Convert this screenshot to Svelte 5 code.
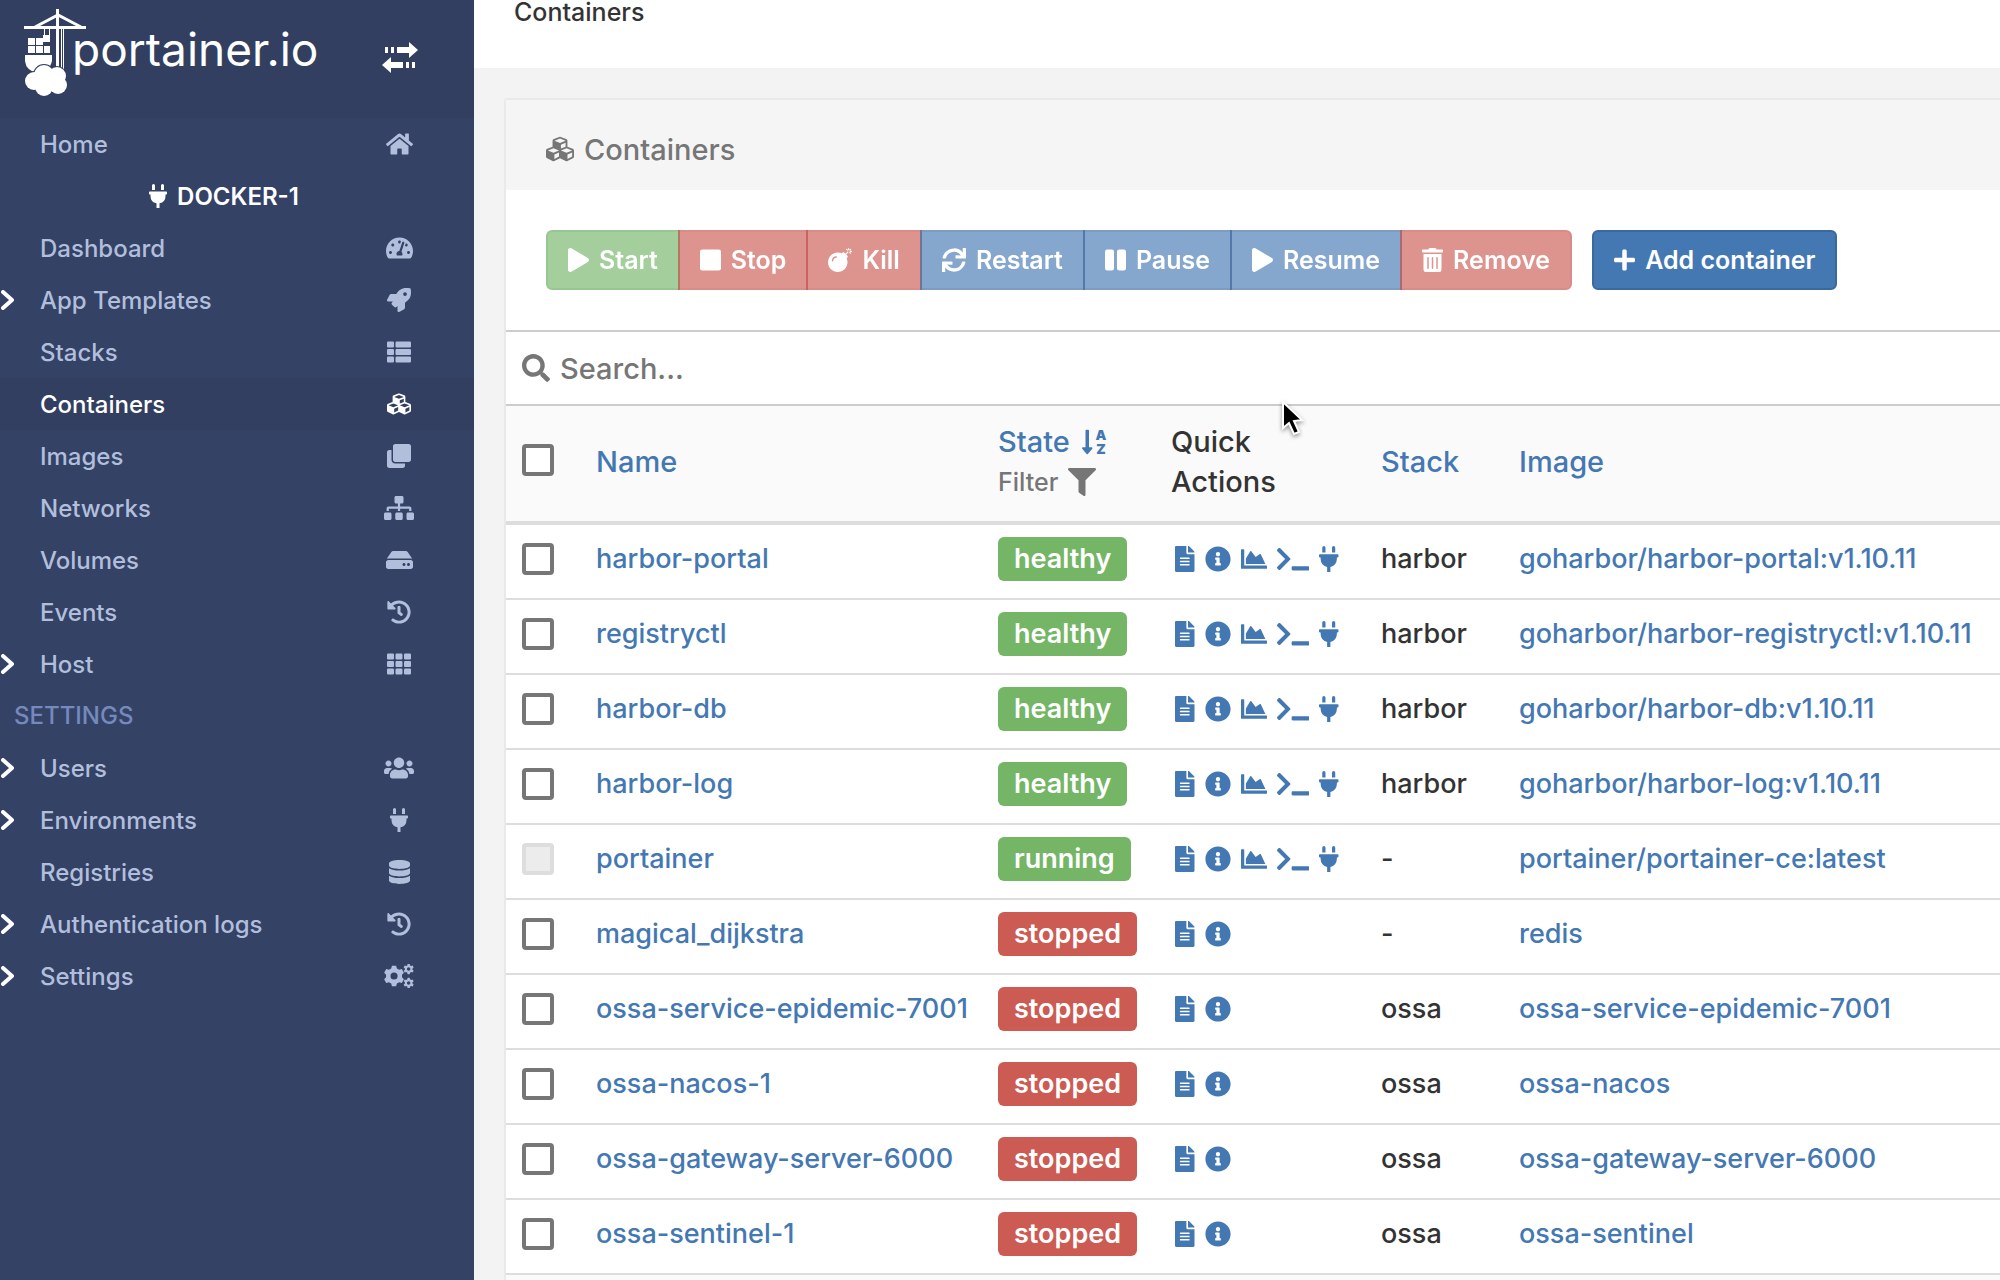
<script lang="ts">
	type Container = {
		name: string;
		state: 'healthy' | 'running' | 'stopped';
		stack: string;
		image: string;
		locked?: boolean;
	};

	const cell = (x: number, y: number, w: number, h: number, r = 24) =>
		`M${x + r} ${y}h${w - 2 * r}a${r} ${r} 0 0 1 ${r} ${r}v${h - 2 * r}a${r} ${r} 0 0 1-${r} ${r}h-${w - 2 * r}a${r} ${r} 0 0 1-${r}-${r}v-${h - 2 * r}a${r} ${r} 0 0 1 ${r}-${r}z`;

	const gear = (cx: number, cy: number, outer: number, inner: number, hole: number) => {
		const teeth = 6;
		const points: string[] = [];
		for (let i = 0; i < teeth; i++) {
			const mid = (i / teeth) * Math.PI * 2 - Math.PI / 2;
			const corners = [
				[inner, -0.36],
				[outer, -0.2],
				[outer, 0.2],
				[inner, 0.36]
			];
			for (const [r, a] of corners) {
				points.push(`${cx + r * Math.cos(mid + a)} ${cy + r * Math.sin(mid + a)}`);
			}
		}
		return `M${points.join('L')}zM${cx - hole} ${cy}a${hole} ${hole} 0 1 0 ${hole * 2} 0a${hole} ${hole} 0 1 0-${hole * 2} 0z`;
	};

	const rows = [32, 192, 352];

	const icons: Record<string, { w: number; d: string }> = {
		home: {
			w: 576,
			d: 'M280.37 148.26L96 300.11V464a16 16 0 0 0 16 16l112.06-.29a16 16 0 0 0 15.92-16V368a16 16 0 0 1 16-16h64a16 16 0 0 1 16 16v95.64a16 16 0 0 0 16 16.05L464 480a16 16 0 0 0 16-16V300L295.67 148.26a12.19 12.19 0 0 0-15.3 0zM571.6 251.47L488 182.56V44.05a12 12 0 0 0-12-12h-56a12 12 0 0 0-12 12v72.61L318.47 43a48 48 0 0 0-61 0L4.34 251.47a12 12 0 0 0-1.6 16.9l25.5 31A12 12 0 0 0 45.15 301l235.22-193.74a12.19 12.19 0 0 1 15.3 0L530.9 301a12 12 0 0 0 16.9-1.6l25.5-31a12 12 0 0 0-1.7-16.93z'
		},
		tachometer: {
			w: 576,
			d: 'M288 32C128.94 32 0 160.94 0 320c0 52.8 14.25 102.26 39.06 144.8 5.61 9.62 16.3 15.2 27.44 15.2h443c11.14 0 21.83-5.58 27.44-15.2C561.75 422.26 576 372.8 576 320c0-159.06-128.94-288-288-288zm0 64c14.71 0 26.58 10.13 30.32 23.65-1.11 2.26-2.64 4.23-3.45 6.67l-9.22 27.67c-5.13 3.49-10.97 6.01-17.64 6.01-17.67 0-32-14.33-32-32S270.33 96 288 96zM96 384c-17.67 0-32-14.33-32-32s14.33-32 32-32 32 14.33 32 32-14.33 32-32 32zm48-160c-17.67 0-32-14.33-32-32s14.33-32 32-32 32 14.33 32 32-14.33 32-32 32zm246.77-72.41l-61.33 184C343.13 347.33 352 364.54 352 384c0 11.72-3.38 22.55-8.88 32H232.88c-5.5-9.45-8.88-20.28-8.88-32 0-33.94 26.5-61.43 59.9-63.59l61.34-184.01c4.17-12.56 17.73-19.45 30.36-15.17 12.57 4.19 19.35 17.79 15.17 30.36zm14.66 57.2l15.52-46.55c3.47-1.29 7.13-2.23 11.05-2.23 17.67 0 32 14.33 32 32s-14.33 32-32 32c-11.38-.01-20.89-6.28-26.57-15.22zM480 384c-17.67 0-32-14.33-32-32s14.33-32 32-32 32 14.33 32 32-14.33 32-32 32z'
		},
		rocket: {
			w: 512,
			d: 'M505.12 19.094c-1.19-5.532-6.658-11-12.207-12.188C460.716 0 435.507 0 410.407 0 307.175 0 245.27 55.203 199.052 128H94.838c-16.348.016-35.557 11.875-42.887 26.484L2.516 253.297A28.4 28.4 0 0 0 0 264a24.009 24.009 0 0 0 24.006 24h103.81l-22.474 22.469c-11.366 11.36-12.996 32.258 0 45.25l50.904 50.906c11.156 11.188 32.156 13.156 45.277 0l22.475-22.469V488a24.009 24.009 0 0 0 24.005 24 28.56 28.56 0 0 0 10.707-2.516l98.729-49.39c14.629-7.297 26.508-26.5 26.508-42.86V312.797c72.597-46.313 128.035-108.406 128.035-211.094.093-25.203.093-50.406-6.862-82.61zM384.04 168A40 40 0 1 1 424.05 128a40.023 40.023 0 0 1-40.01 40z'
		},
		list: {
			w: 512,
			d: rows.map((y) => cell(0, y, 149, 128) + cell(181, y, 331, 128)).join('')
		},
		grid: {
			w: 512,
			d: rows.map((y) => cell(0, y, 149, 128) + cell(181, y, 149, 128) + cell(363, y, 149, 128)).join('')
		},
		cubes: {
			w: 512,
			d: 'M488.6 250.2L392 214V105.5c0-15-9.3-28.4-23.4-33.7l-100-37.5c-8.1-3.1-17.1-3.1-25.3 0l-100 37.5c-14.1 5.3-23.4 18.7-23.4 33.7V214l-96.6 36.2C9.3 255.5 0 268.9 0 283.9V394c0 13.6 7.7 26.1 19.9 32.2l100 50c10.1 5.1 22.1 5.1 32.2 0l103.9-52 103.9 52c10.1 5.1 22.1 5.1 32.2 0l100-50c12.2-6.1 19.9-18.6 19.9-32.2V283.9c0-15-9.3-28.4-23.4-33.7zM358 214.8l-85 31.9v-68.2l85-37v73.3zM154 104.1l102-38.2 102 38.2v.6l-102 41.4-102-41.4v-.6zm84 291.1l-85 42.5v-79.1l85-38.8v75.4zm0-112l-102 41.4-102-41.4v-.6l102-38.2 102 38.2v.6zm240 112l-85 42.5v-79.1l85-38.8v75.4zm0-112l-102 41.4-102-41.4v-.6l102-38.2 102 38.2v.6z'
		},
		clone: {
			w: 512,
			d: 'M464 0c26.51 0 48 21.49 48 48v288c0 26.51-21.49 48-48 48H176c-26.51 0-48-21.49-48-48V48c0-26.51 21.49-48 48-48h288M176 416c-44.112 0-80-35.888-80-80V128H48c-26.51 0-48 21.49-48 48v288c0 26.51 21.49 48 48 48h288c26.51 0 48-21.49 48-48v-48H176z'
		},
		sitemap: {
			w: 640,
			d: 'M128 352H32c-17.67 0-32 14.33-32 32v96c0 17.67 14.33 32 32 32h96c17.67 0 32-14.33 32-32v-96c0-17.67-14.33-32-32-32zm-24-80h192v48h48v-48h192v48h48v-57.59c0-21.17-17.23-38.41-38.41-38.41H344v-64h40c17.67 0 32-14.33 32-32V32c0-17.67-14.33-32-32-32H256c-17.67 0-32 14.33-32 32v96c0 17.67 14.33 32 32 32h40v64H94.41C73.23 224 56 241.23 56 262.41V320h48v-48zm264 80h-96c-17.67 0-32 14.33-32 32v96c0 17.67 14.33 32 32 32h96c17.67 0 32-14.33 32-32v-96c0-17.67-14.33-32-32-32zm240 0h-96c-17.67 0-32 14.33-32 32v96c0 17.67 14.33 32 32 32h96c17.67 0 32-14.33 32-32v-96c0-17.67-14.33-32-32-32z'
		},
		hdd: {
			w: 576,
			d: 'M576 304v96c0 26.51-21.49 48-48 48H48c-26.51 0-48-21.49-48-48v-96c0-26.51 21.49-48 48-48h480c26.51 0 48 21.49 48 48zm-48-80a79.557 79.557 0 0 1 30.777 6.165L462.25 85.374A48.003 48.003 0 0 0 422.311 64H153.689a48 48 0 0 0-39.938 21.374L17.223 230.165A79.557 79.557 0 0 1 48 224h480zm-48 96c-17.673 0-32 14.327-32 32s14.327 32 32 32 32-14.327 32-32-14.327-32-32-32zm-96 0c-17.673 0-32 14.327-32 32s14.327 32 32 32 32-14.327 32-32-14.327-32-32-32z'
		},
		history: {
			w: 512,
			d: 'M504 255.531c.253 136.64-111.18 248.372-247.82 248.468-59.015.042-113.223-20.53-155.822-54.911-11.077-8.94-11.905-25.541-1.839-35.607l11.267-11.267c8.609-8.609 22.353-9.551 31.891-1.984C173.062 425.135 212.781 440 256 440c101.705 0 184-82.311 184-184 0-101.705-82.311-184-184-184-48.814 0-93.149 18.969-126.068 49.932l50.754 50.754c10.08 10.08 2.941 27.314-11.313 27.314H24c-8.837 0-16-7.163-16-16V38.627c0-14.254 17.234-21.393 27.314-11.314l49.372 49.372C129.209 34.136 189.552 8 256 8c136.81 0 247.747 110.78 248 247.531zm-180.912 78.784l9.823-12.63c8.138-10.463 6.253-25.542-4.21-33.679L288 256.349V152c0-13.255-10.745-24-24-24h-16c-13.255 0-24 10.745-24 24v135.651l65.409 50.874c10.463 8.137 25.541 6.253 33.679-4.21z'
		},
		users: {
			w: 640,
			d: 'M96 224c35.3 0 64-28.7 64-64s-28.7-64-64-64-64 28.7-64 64 28.7 64 64 64zm448 0c35.3 0 64-28.7 64-64s-28.7-64-64-64-64 28.7-64 64 28.7 64 64 64zm32 32h-64c-17.6 0-33.5 7.1-45.1 18.6 40.3 22.1 68.9 62 75.1 109.4h66c17.7 0 32-14.3 32-32v-32c0-35.3-28.7-64-64-64zm-256 0c61.9 0 112-50.1 112-112S381.9 32 320 32 208 82.1 208 144s50.1 112 112 112zm76.8 32h-8.3c-20.8 10-43.9 16-68.5 16s-47.6-6-68.5-16h-8.3C179.6 288 128 339.6 128 403.2V432c0 26.5 21.5 48 48 48h288c26.5 0 48-21.5 48-48v-28.8c0-63.6-51.6-115.2-115.2-115.2zm-223.7-13.4C161.5 263.1 145.6 256 128 256H64c-35.3 0-64 28.7-64 64v32c0 17.7 14.3 32 32 32h65.9c6.3-47.4 34.9-87.3 75.2-109.4z'
		},
		plug: {
			w: 384,
			d: 'M320 32a32 32 0 0 0-64 0v96h64zm48 128H16A16 16 0 0 0 0 176v32a16 16 0 0 0 16 16h16v32a160.07 160.07 0 0 0 128 156.8V512h64v-99.2A160.07 160.07 0 0 0 352 256v-32h16a16 16 0 0 0 16-16v-32a16 16 0 0 0-16-16zM128 32a32 32 0 0 0-64 0v96h64z'
		},
		database: {
			w: 448,
			d: 'M448 73.143v45.714C448 159.143 347.667 192 224 192S0 159.143 0 118.857V73.143C0 32.857 100.333 0 224 0s224 32.857 224 73.143zM448 176v102.857C448 319.143 347.667 352 224 352S0 319.143 0 278.857V176c48.125 33.143 136.208 48.572 224 48.572S399.874 209.143 448 176zm0 160v102.857C448 479.143 347.667 512 224 512S0 479.143 0 438.857V336c48.125 33.143 136.208 48.572 224 48.572S399.874 369.143 448 336z'
		},
		cogs: {
			w: 640,
			d: gear(214, 256, 222, 172, 76) + gear(526, 108, 112, 82, 38) + gear(526, 404, 112, 82, 38)
		},
		play: {
			w: 448,
			d: 'M424.4 214.7L72.4 6.6C43.8-10.3 0 6.1 0 47.9V464c0 37.5 40.7 60.1 72.4 41.3l352-208c31.4-18.5 31.5-64.1 0-82.6z'
		},
		stop: { w: 448, d: cell(0, 32, 448, 448, 48) },
		bomb: {
			w: 512,
			d: 'M440.5 88.5l-52 52L415 167c9.4 9.4 9.4 24.6 0 33.9l-17.4 17.4c11.8 26.1 18.4 55.1 18.4 85.6 0 114.9-93.1 208-208 208S0 418.9 0 304 93.1 96 208 96c30.5 0 59.5 6.6 85.6 18.4L311 97c9.4-9.4 24.6-9.4 33.9 0l26.5 26.5 52-52 17.1 17zM500 60h-24c-6.6 0-12 5.4-12 12s5.4 12 12 12h24c6.6 0 12-5.4 12-12s-5.4-12-12-12zM440 0c-6.6 0-12 5.4-12 12v24c0 6.6 5.4 12 12 12s12-5.4 12-12V12c0-6.6-5.4-12-12-12zm33.9 55l17-17c4.7-4.7 4.7-12.3 0-17-4.7-4.7-12.3-4.7-17 0l-17 17c-4.7 4.7-4.7 12.3 0 17 4.8 4.7 12.4 4.7 17 0zm-67.8 0c4.7 4.7 12.3 4.7 17 0 4.7-4.7 4.7-12.3 0-17l-17-17c-4.7-4.7-12.3-4.7-17 0-4.7 4.7-4.7 12.3 0 17l17 17zm67.8 34c-4.7-4.7-12.3-4.7-17 0-4.7 4.7-4.7 12.3 0 17l17 17c4.7 4.7 12.3 4.7 17 0 4.7-4.7 4.7-12.3 0-17l-17-17zM112 272c0-35.3 28.7-64 64-64 8.8 0 16-7.2 16-16s-7.2-16-16-16c-52.9 0-96 43.1-96 96 0 8.8 7.2 16 16 16s16-7.2 16-16z'
		},
		sync: {
			w: 512,
			d: 'M440.65 12.57l4 82.77A247.16 247.16 0 0 0 255.83 8C134.73 8 33.91 94.92 12.29 209.82A12 12 0 0 0 24.09 224h49.05a12 12 0 0 0 11.67-9.26 175.91 175.91 0 0 1 317-56.94l-101.46-4.86a12 12 0 0 0-12.57 12v47.41a12 12 0 0 0 12 12H500a12 12 0 0 0 12-12V12a12 12 0 0 0-12-12h-47.37a12 12 0 0 0-11.98 12.57zM255.83 432a175.61 175.61 0 0 1-146-77.8l101.8 4.87a12 12 0 0 0 12.57-12v-47.4a12 12 0 0 0-12-12H12a12 12 0 0 0-12 12V500a12 12 0 0 0 12 12h47.35a12 12 0 0 0 12-12.6l-4.15-82.57A247.17 247.17 0 0 0 255.83 504c121.11 0 221.93-86.92 243.55-201.82a12 12 0 0 0-11.8-14.18h-49.05a12 12 0 0 0-11.67 9.26A175.86 175.86 0 0 1 255.83 432z'
		},
		pause: { w: 448, d: cell(0, 32, 192, 448, 48) + cell(256, 32, 192, 448, 48) },
		trash: {
			w: 448,
			d: 'M32 464a48 48 0 0 0 48 48h288a48 48 0 0 0 48-48V128H32zm272-256a16 16 0 0 1 32 0v224a16 16 0 0 1-32 0zm-96 0a16 16 0 0 1 32 0v224a16 16 0 0 1-32 0zm-96 0a16 16 0 0 1 32 0v224a16 16 0 0 1-32 0zM432 32H312l-9.4-18.7A24 24 0 0 0 281.1 0H166.8a23.72 23.72 0 0 0-21.4 13.3L136 32H16A16 16 0 0 0 0 48v32a16 16 0 0 0 16 16h416a16 16 0 0 0 16-16V48a16 16 0 0 0-16-16z'
		},
		plus: {
			w: 448,
			d: 'M416 208H272V64c0-17.67-14.33-32-32-32h-32c-17.67 0-32 14.33-32 32v144H32c-17.67 0-32 14.33-32 32v32c0 17.67 14.33 32 32 32h144v144c0 17.67 14.33 32 32 32h32c17.67 0 32-14.33 32-32V304h144c17.67 0 32-14.33 32-32v-32c0-17.67-14.33-32-32-32z'
		},
		search: {
			w: 512,
			d: 'M505 442.7L405.3 343c-4.5-4.5-10.6-7-17-7H372c27.6-35.3 44-79.7 44-128C416 93.1 322.9 0 208 0S0 93.1 0 208s93.1 208 208 208c48.3 0 92.7-16.4 128-44v16.3c0 6.4 2.5 12.5 7 17l99.7 99.7c9.4 9.4 24.6 9.4 33.9 0l28.3-28.3c9.4-9.4 9.4-24.6.1-34zM208 336c-70.7 0-128-57.2-128-128 0-70.7 57.2-128 128-128 70.7 0 128 57.2 128 128 0 70.7-57.2 128-128 128z'
		},
		filter: {
			w: 512,
			d: 'M487.976 0H24.028C2.71 0-8.047 25.866 7.058 40.971L192 225.941V432c0 7.831 3.821 15.17 10.237 19.662l80 55.98C298.02 518.69 320 507.493 320 487.98V225.941l184.947-184.97C520.021 25.896 509.338 0 487.976 0z'
		},
		file: {
			w: 384,
			d: 'M224 136V0H24C10.7 0 0 10.7 0 24v464c0 13.3 10.7 24 24 24h336c13.3 0 24-10.7 24-24V160H248c-13.2 0-24-10.8-24-24zm64 236c0 6.6-5.4 12-12 12H108c-6.6 0-12-5.4-12-12v-8c0-6.6 5.4-12 12-12h168c6.6 0 12 5.4 12 12v8zm0-64c0 6.6-5.4 12-12 12H108c-6.6 0-12-5.4-12-12v-8c0-6.6 5.4-12 12-12h168c6.6 0 12 5.4 12 12v8zm0-72v8c0 6.6-5.4 12-12 12H108c-6.6 0-12-5.4-12-12v-8c0-6.6 5.4-12 12-12h168c6.6 0 12 5.4 12 12zm96-114.1v6.1H256V0h6.1c6.4 0 12.5 2.5 17 7l97.9 98c4.5 4.5 7 10.6 7 16.9z'
		},
		info: {
			w: 512,
			d: 'M256 8C119.043 8 8 119.083 8 256c0 136.997 111.043 248 248 248s248-111.003 248-248C504 119.083 392.957 8 256 8zm0 110c23.196 0 42 18.804 42 42s-18.804 42-42 42-42-18.804-42-42 18.804-42 42-42zm56 254c0 6.627-5.373 12-12 12h-88c-6.627 0-12-5.373-12-12v-24c0-6.627 5.373-12 12-12h12v-64h-12c-6.627 0-12-5.373-12-12v-24c0-6.627 5.373-12 12-12h64c6.627 0 12 5.373 12 12v100h12c6.627 0 12 5.373 12 12v24z'
		},
		chart: {
			w: 512,
			d: 'M500 384c6.6 0 12 5.4 12 12v40c0 6.6-5.4 12-12 12H12c-6.6 0-12-5.4-12-12V76c0-6.6 5.4-12 12-12h40c6.6 0 12 5.4 12 12v308h436zM372.7 159.5L288 216l-85.3-113.7c-5.1-6.8-15.5-6.3-19.9 1L96 248v104h384l-89.9-187.8c-3.2-6.5-11.4-8.7-17.4-4.7z'
		},
		terminal: {
			w: 640,
			d: 'M257.981 272.971L63.638 467.314c-9.373 9.373-24.569 9.373-33.941 0L7.029 444.647c-9.357-9.357-9.375-24.522-.04-33.901L161.011 256 6.99 101.255c-9.335-9.379-9.317-24.544.04-33.901l22.667-22.667c9.373-9.373 24.569-9.373 33.941 0L257.981 239.03c9.373 9.372 9.373 24.568 0 33.941zM640 456v-32c0-13.255-10.745-24-24-24H312c-13.255 0-24 10.745-24 24v32c0 13.255 10.745 24 24 24h304c13.255 0 24-10.745 24-24z'
		}
	};

	const mainMenu = [
		{ label: 'Dashboard', icon: 'tachometer' },
		{ label: 'App Templates', icon: 'rocket', expandable: true },
		{ label: 'Stacks', icon: 'list' },
		{ label: 'Containers', icon: 'cubes' },
		{ label: 'Images', icon: 'clone' },
		{ label: 'Networks', icon: 'sitemap' },
		{ label: 'Volumes', icon: 'hdd' },
		{ label: 'Events', icon: 'history' },
		{ label: 'Host', icon: 'grid', expandable: true }
	];

	const settingsMenu = [
		{ label: 'Users', icon: 'users', expandable: true },
		{ label: 'Environments', icon: 'plug', expandable: true },
		{ label: 'Registries', icon: 'database' },
		{ label: 'Authentication logs', icon: 'history', expandable: true },
		{ label: 'Settings', icon: 'cogs', expandable: true }
	];

	const actions = [
		{ label: 'Start', icon: 'play', kind: 'success' },
		{ label: 'Stop', icon: 'stop', kind: 'danger' },
		{ label: 'Kill', icon: 'bomb', kind: 'danger' },
		{ label: 'Restart', icon: 'sync', kind: 'primary' },
		{ label: 'Pause', icon: 'pause', kind: 'primary' },
		{ label: 'Resume', icon: 'play', kind: 'primary' },
		{ label: 'Remove', icon: 'trash', kind: 'danger' }
	];

	const containers: Container[] = [
		{ name: 'harbor-portal', state: 'healthy', stack: 'harbor', image: 'goharbor/harbor-portal:v1.10.11' },
		{ name: 'registryctl', state: 'healthy', stack: 'harbor', image: 'goharbor/harbor-registryctl:v1.10.11' },
		{ name: 'harbor-db', state: 'healthy', stack: 'harbor', image: 'goharbor/harbor-db:v1.10.11' },
		{ name: 'harbor-log', state: 'healthy', stack: 'harbor', image: 'goharbor/harbor-log:v1.10.11' },
		{ name: 'portainer', state: 'running', stack: '-', image: 'portainer/portainer-ce:latest', locked: true },
		{ name: 'magical_dijkstra', state: 'stopped', stack: '-', image: 'redis' },
		{ name: 'ossa-service-epidemic-7001', state: 'stopped', stack: 'ossa', image: 'ossa-service-epidemic-7001' },
		{ name: 'ossa-nacos-1', state: 'stopped', stack: 'ossa', image: 'ossa-nacos' },
		{ name: 'ossa-gateway-server-6000', state: 'stopped', stack: 'ossa', image: 'ossa-gateway-server-6000' },
		{ name: 'ossa-sentinel-1', state: 'stopped', stack: 'ossa', image: 'ossa-sentinel' }
	];

	const quickActions = [
		{ label: 'Logs', icon: 'file' },
		{ label: 'Inspect', icon: 'info' },
		{ label: 'Stats', icon: 'chart' },
		{ label: 'Console', icon: 'terminal' },
		{ label: 'Attach', icon: 'plug' }
	];

	let active = $state('Containers');
	let search = $state('');
	let selected: string[] = $state([]);

	let visible = $derived(containers.filter((c) => c.name.includes(search.toLowerCase())));
	let allSelected = $derived(selected.length > 0 && selected.length === containers.filter((c) => !c.locked).length);

	const toggleAll = () => {
		selected = allSelected ? [] : containers.filter((c) => !c.locked).map((c) => c.name);
	};
</script>

{#snippet icon(name: string)}
	<svg class="icon" viewBox="0 0 {icons[name].w} 512" aria-hidden="true">
		<path fill-rule="evenodd" d={icons[name].d} />
	</svg>
{/snippet}

{#snippet menuItem(item: { label: string; icon: string; expandable?: boolean })}
	<li>
		<a href="#{item.label}" class="menu-item" class:active={active === item.label} onclick={() => (active = item.label)}>
			<span class="arrow">
				{#if item.expandable}
					<svg viewBox="0 0 14 20" width="14" height="20" aria-hidden="true"><path d="M3 2l9 8-9 8" /></svg>
				{/if}
			</span>
			<span class="label">{item.label}</span>
			<span class="menu-icon">{@render icon(item.icon)}</span>
		</a>
	</li>
{/snippet}

<div class="page">
	<aside class="sidebar">
		<div class="sidebar-header">
			<a href="#home" class="logo">
				<svg viewBox="0 0 62 87" width="62" height="87" aria-hidden="true">
					<path d="M0 17h62v3H0zM32 0h3v60h-3zM37 20h1v40h-1zM39 20h1v40h-1z" />
					<path class="line" d="M11 18L34 6l23 12" />
					<path d="M20 20h1v6h-1zM25 20h1v6h-1zM19 26h7v7h-7z" />
					<path d="M4 29h7v7H4zM12 29h7v7h-7zM4 37h7v7H4zM12 37h7v7h-7zM20 37h6v7h-6z" />
					<path d="M1 46h27v6q-3 12-14 12Q2 62 1 52z" />
					<g class="cloud-edge">
						<circle cx="10" cy="72" r="10" />
						<circle cx="20" cy="66" r="11" />
						<circle cx="33" cy="67" r="10" />
					</g>
					<circle cx="10" cy="72" r="9" />
					<circle cx="20" cy="66" r="10" />
					<circle cx="33" cy="67" r="9" />
					<circle cx="20" cy="78" r="9" />
					<circle cx="34" cy="76" r="9" />
				</svg>
				<span>portainer.io</span>
			</a>
			<button class="toggle" aria-label="Toggle sidebar">
				<svg viewBox="0 0 36 31" width="36" height="31" aria-hidden="true">
					<path d="M3 5h3v6H3zM9 5h3v6H9zM15 5h12V0l9 8-9 8v-5H15zM33 20h-3v6h3zM27 20h-3v6h3zM21 20H9v-5l-9 8 9 8v-5h12z" />
				</svg>
			</button>
		</div>
		<ul>
			{@render menuItem({ label: 'Home', icon: 'home' })}
			<li class="endpoint">{@render icon('plug')}<span>DOCKER-1</span></li>
			{#each mainMenu as item}
				{@render menuItem(item)}
			{/each}
			<li class="section">SETTINGS</li>
			{#each settingsMenu as item}
				{@render menuItem(item)}
			{/each}
		</ul>
	</aside>

	<main>
		<header class="page-header">Containers</header>

		<section class="panel">
			<h1>{@render icon('cubes')}<span>Containers</span></h1>

			<div class="actions">
				<div class="group">
					{#each actions as action}
						<button class="btn {action.kind}" disabled={selected.length === 0}>
							{@render icon(action.icon)}{action.label}
						</button>
					{/each}
				</div>
				<button class="btn primary">{@render icon('plus')}Add container</button>
			</div>

			<label class="search">
				{@render icon('search')}
				<input type="text" aria-label="Search" placeholder="Search..." bind:value={search} />
			</label>

			<table>
				<colgroup>
					<col class="col-check" />
					<col class="col-name" />
					<col class="col-state" />
					<col class="col-actions" />
					<col class="col-stack" />
					<col />
				</colgroup>
				<thead>
					<tr>
						<th class="check"><input type="checkbox" aria-label="Select all" checked={allSelected} onchange={toggleAll} /></th>
						<th><a href="#name">Name</a></th>
						<th>
							<a href="#state" class="sort">
								State
								<svg class="icon" viewBox="0 0 448 512" aria-hidden="true">
									<path d="M176 352h-48V48a16 16 0 0 0-16-16H80a16 16 0 0 0-16 16v304H16c-14.19 0-21.36 17.24-11.29 27.31l80 96a16 16 0 0 0 22.62 0l80-96C197.35 369.26 190.22 352 176 352z" />
									<text x="346" y="216" text-anchor="middle">A</text>
									<text x="346" y="480" text-anchor="middle">Z</text>
								</svg>
							</a>
							<button class="filter">Filter {@render icon('filter')}</button>
						</th>
						<th>Quick Actions</th>
						<th><a href="#stack">Stack</a></th>
						<th><a href="#image">Image</a></th>
					</tr>
				</thead>
				<tbody>
					{#each visible as container}
						<tr>
							<td>
								<input
									type="checkbox"
									aria-label="Select {container.name}"
									value={container.name}
									disabled={container.locked}
									bind:group={selected}
								/>
							</td>
							<td><a href="#{container.name}">{container.name}</a></td>
							<td><span class="badge {container.state}">{container.state}</span></td>
							<td>
								<div class="quick">
									{#each container.state === 'stopped' ? quickActions.slice(0, 2) : quickActions as quick}
										<a href="#{quick.label}" aria-label={quick.label}>{@render icon(quick.icon)}</a>
									{/each}
								</div>
							</td>
							<td>{container.stack}</td>
							<td><a href="#{container.image}">{container.image}</a></td>
						</tr>
					{/each}
				</tbody>
			</table>
			<footer class="panel-footer"></footer>
		</section>
	</main>

	<svg class="cursor" viewBox="0 0 24 38" width="24" height="38" aria-hidden="true">
		<path d="M2 3v26l6-5 5 11 5-2-5-11 8-1z" />
	</svg>
</div>

<style>
	:global(body) {
		overflow: hidden;
	}

	.page {
		position: relative;
		display: flex;
		height: 100vh;
		overflow: hidden;
		background-color: #f3f3f3;
		color: #333;
		font-family: Inter, 'Noto Sans', sans-serif;
		font-size: 27px;
		font-weight: 500;
	}

	a {
		color: #4478b3;
		text-decoration: none;
	}

	button,
	input {
		font: inherit;
	}

	.icon {
		display: block;
		flex: none;
		height: 24px;
		fill: currentColor;
	}

	.sidebar {
		flex: none;
		width: 474px;
		background-color: #344266;
		font-size: 24px;
	}

	.sidebar-header {
		display: flex;
		align-items: flex-start;
		justify-content: space-between;
		box-sizing: border-box;
		height: 118px;
		padding: 9px 56px 0 24px;
		background-color: #323f60;
	}

	.logo {
		display: flex;
		color: #fff;
		font-size: 46px;
		font-weight: 400;
		line-height: 80px;
	}

	.logo span {
		margin-left: -14px;
	}

	.logo svg {
		fill: #fff;
	}

	.logo .line {
		fill: none;
		stroke: #fff;
		stroke-width: 3;
	}

	.logo .cloud-edge {
		fill: #323f60;
	}

	.toggle {
		margin-top: 33px;
		padding: 0;
		border: 0;
		background: none;
		fill: #fff;
	}

	.toggle svg {
		display: block;
	}

	ul {
		margin: 0;
		padding: 0;
		list-style: none;
	}

	.menu-item {
		display: flex;
		align-items: center;
		height: 52px;
		padding-right: 51px;
		color: #b2bfdc;
	}

	.menu-item.active {
		background-color: #323f60;
		color: #fff;
	}

	.arrow {
		width: 40px;
	}

	.arrow svg {
		display: block;
		fill: none;
		stroke: #fff;
		stroke-width: 4;
		stroke-linecap: round;
		stroke-linejoin: round;
	}

	.label {
		flex: 1;
	}

	.menu-icon {
		display: flex;
		justify-content: center;
		width: 48px;
	}

	.endpoint {
		display: flex;
		align-items: center;
		justify-content: center;
		gap: 10px;
		height: 52px;
		padding-right: 26px;
		color: #fff;
		font-weight: 600;
	}

	.section {
		padding-left: 14px;
		color: #7689bd;
		line-height: 52px;
	}

	main {
		flex: 1;
		min-width: 0;
	}

	.page-header {
		box-sizing: border-box;
		height: 68px;
		padding-left: 40px;
		background-color: #fff;
		font-size: 25px;
		line-height: 24px;
	}

	.panel {
		margin: 30px 0 0 30px;
		border: 2px solid #e9e9e9;
		border-right: 0;
		border-radius: 4px 0 0 0;
		background-color: #fff;
	}

	h1 {
		display: flex;
		align-items: center;
		gap: 10px;
		box-sizing: border-box;
		height: 90px;
		margin: 0;
		padding: 8px 40px 0;
		background-color: #f5f5f5;
		color: #767676;
		font-size: 29px;
		font-weight: 500;
	}

	h1 .icon,
	.search .icon,
	.sort .icon,
	.filter .icon {
		height: 28px;
	}

	.actions {
		display: flex;
		gap: 20px;
		padding: 40px;
	}

	.group {
		display: flex;
	}

	.btn {
		display: flex;
		align-items: center;
		gap: 10px;
		height: 60px;
		padding: 0 20px;
		border: 2px solid;
		border-radius: 6px;
		color: #fff;
		font-size: 25px;
		font-weight: 600;
		white-space: nowrap;
	}

	.btn:disabled {
		opacity: 0.65;
	}

	.group .btn:not(:first-child) {
		margin-left: -2px;
		border-top-left-radius: 0;
		border-bottom-left-radius: 0;
	}

	.group .btn:not(:last-child) {
		border-top-right-radius: 0;
		border-bottom-right-radius: 0;
	}

	.success {
		border-color: #62a858;
		background-color: #74b566;
	}

	.danger {
		border-color: #c44e48;
		background-color: #cb5b53;
	}

	.primary {
		border-color: #3a689f;
		background-color: #4478b3;
	}

	.search {
		display: flex;
		align-items: center;
		gap: 10px;
		height: 72px;
		padding: 0 16px;
		border-top: 2px solid #ccc;
		border-bottom: 2px solid #ccc;
		color: #767676;
		font-size: 29px;
	}

	.search input {
		flex: 1;
		padding: 0;
		border: 0;
		outline: none;
		background: none;
	}

	.search input::placeholder {
		color: #767676;
	}

	table {
		width: 100%;
		border-collapse: separate;
		border-spacing: 0;
		table-layout: fixed;
	}

	.col-check {
		width: 74px;
	}

	.col-name {
		width: 402px;
	}

	.col-state {
		width: 173px;
	}

	.col-actions {
		width: 210px;
	}

	.col-stack {
		width: 138px;
	}

	th {
		box-sizing: border-box;
		height: 119px;
		padding: 0 16px 4px;
		border-bottom: 4px solid #ddd;
		background-color: #fafafa;
		font-size: 29px;
		font-weight: 500;
		line-height: 40px;
		text-align: left;
	}

	th.check {
		padding-bottom: 8px;
	}

	th:nth-child(4) {
		padding-right: 64px;
	}

	.sort {
		display: flex;
		align-items: center;
		gap: 12px;
	}

	.sort .icon {
		overflow: visible;
	}

	.sort text {
		font-size: 250px;
		font-weight: 900;
	}

	.filter {
		display: flex;
		align-items: center;
		gap: 10px;
		height: 40px;
		padding: 0;
		border: 0;
		background: none;
		color: #767676;
		font-size: 25px;
		font-weight: 500;
	}

	td {
		box-sizing: border-box;
		height: 75px;
		padding: 0 16px 6px;
		border-bottom: 2px solid #ddd;
		white-space: nowrap;
	}

	input[type='checkbox'] {
		display: block;
		appearance: none;
		box-sizing: border-box;
		width: 32px;
		height: 32px;
		margin: 0;
		border: 4px solid #767676;
		border-radius: 4px;
		background-color: #fff;
	}

	input[type='checkbox']:checked {
		background-color: #4478b3;
	}

	input[type='checkbox']:disabled {
		border-color: #ddd;
		background-color: #ececec;
	}

	.badge {
		display: inline-block;
		padding: 0 16px;
		border-radius: 6px;
		color: #fff;
		font-weight: 600;
		line-height: 44px;
	}

	.healthy,
	.running {
		background-color: #74b566;
	}

	.stopped {
		background-color: #cb5b53;
	}

	.quick {
		display: flex;
		gap: 10px;
		padding-left: 4px;
	}

	.quick .icon {
		height: 26px;
	}

	.panel-footer {
		height: 80px;
		background-color: #fafafa;
	}

	.cursor {
		position: absolute;
		top: 399px;
		left: 1281px;
		fill: #000;
		stroke: #fff;
		stroke-width: 2;
		filter: drop-shadow(0 2px 2px rgba(0, 0, 0, 0.4));
	}
</style>
